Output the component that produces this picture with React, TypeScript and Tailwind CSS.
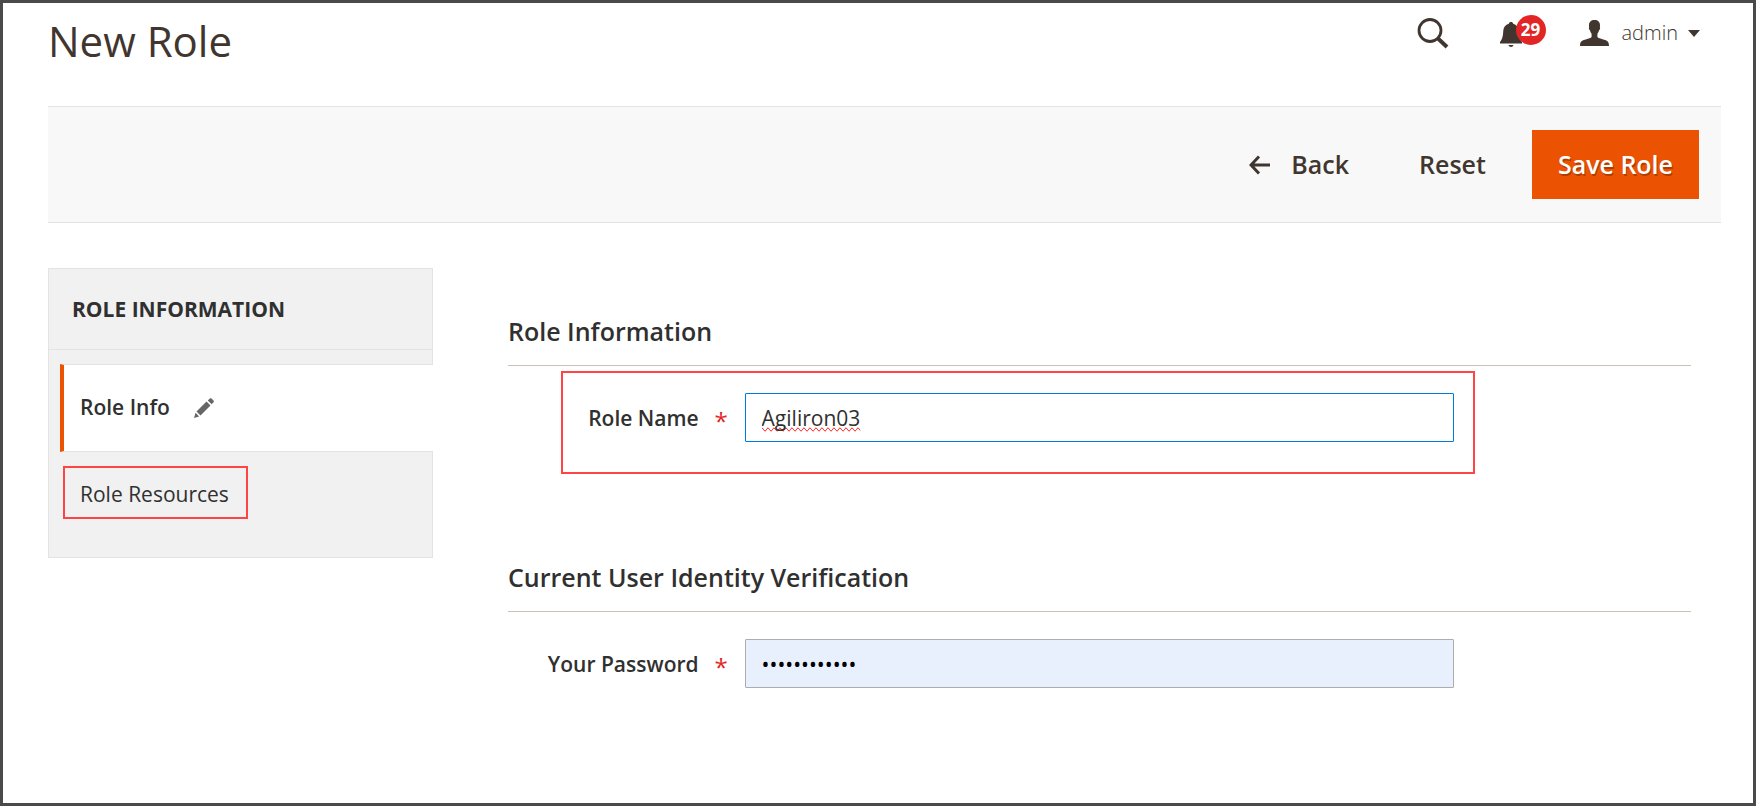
import React, { useState } from 'react';

interface FieldProps {
    id: string;
    label: string;
    children: React.ReactNode;
}

const SearchIcon: React.FC = () => (
    <svg viewBox="0 0 32 32" fill="none" stroke="currentColor" className="h-8 w-8">
        <circle cx="13" cy="13.5" r="11" strokeWidth="2.800" />
        <path d="M20.500 21l2 2" strokeWidth="3" />
        <path d="M21.500 22l8.500 8" strokeWidth="4" />
    </svg>
);

const BellIcon: React.FC = () => (
    <svg viewBox="0 0 22 26" fill="currentColor" className="h-[26px] w-[22px]">
        <path d="M11 0c1.200 0 2 .7 2.200 1.700 3.300.9 5.300 3.300 5.500 6.800.3 5 .6 8 3.300 11.500v1.500H0V20c2.700-3.500 3-6.500 3.300-11.500.2-3.500 2.200-5.900 5.500-6.800C9 .7 9.800 0 11 0z" />
        <path d="M8.500 23h5c-.3 1.300-1.300 2-2.500 2s-2.200-.7-2.500-2z" />
    </svg>
);

const UserIcon: React.FC = () => (
    <svg viewBox="0 0 29 26" fill="currentColor" className="h-[26px] w-[29px]">
        <path d="M14.500 0c3.600 0 5.500 2 5.500 5.200 0 .7 0 1.300-.2 2 .6.400.4 2.300-.6 2.900-.4 1.600-1 2.700-1.800 3.600v3.200c1.200 1.400 4.200 1.900 7.600 3 2.600.8 4 1.800 4 6.100H0c0-4.300 1.400-5.300 4-6.100 3.400-1.100 6.400-1.600 7.600-3v-3.200c-.8-.9-1.400-2-1.800-3.600-1-.6-1.200-2.500-.6-2.900-.2-.7-.2-1.300-.2-2C9 2 10.900 0 14.500 0z" />
    </svg>
);

const PencilIcon: React.FC = () => (
    <svg viewBox="0 0 20 20" fill="currentColor" className="h-5 w-5 text-[#666]">
        <path d="M12.500 3.500l4 4L6.500 17.500l-4-4z" />
        <path d="M13.800 2.400L15.800.5c.5-.5 1.200-.5 1.700 0l2 2c.5.500.5 1.200 0 1.700l-1.900 2z" />
        <path d="M1.600 14.800L5.200 18.400 0 20z" />
    </svg>
);

const BackArrow: React.FC = () => (
    <svg viewBox="0 0 21 20" fill="none" stroke="currentColor" strokeWidth="3" className="h-5 w-[21px]">
        <path d="M10 1.500L2 10l8 8.500M2 10h19" />
    </svg>
);

const Field: React.FC<FieldProps> = ({ id, label, children }) => (
    <div className="flex items-center">
        <label htmlFor={id} className="flex w-1/5 items-center justify-end gap-4 pt-[3px] pr-[18px] font-semibold">
            <span className="whitespace-nowrap">{label}</span>
            <span className="w-3 pt-1 text-2xl font-normal text-[#e22626]">*</span>
        </label>
        <div className="w-3/5">{children}</div>
    </div>
);

const SectionTitle: React.FC<{ children: React.ReactNode }> = ({ children }) => (
    <h2 className="border-b border-[#cac3b4] pb-4 text-[25px] leading-9 font-semibold">{children}</h2>
);

const Header: React.FC = () => (
    <header className="flex items-start justify-between pt-[10px] pr-[21px] pb-[38px] text-[#41362f]">
        <h1 className="text-[42px] leading-[55px]">New Role</h1>
        <div className="flex h-10 items-center">
            <button type="button" aria-label="Search" className="mr-[51px]">
                <SearchIcon />
            </button>
            <button type="button" aria-label="Notifications" className="relative mr-[58px] pt-[3px]">
                <BellIcon />
                <span className="absolute -top-1 left-4 flex h-[30px] w-[30px] items-center justify-center rounded-full bg-[#e22626] text-[17px] font-bold text-white">
                    29
                </span>
            </button>
            <button type="button" className="flex items-center">
                <UserIcon />
                <span className="ml-[13px] text-xl leading-7 font-light">admin</span>
                <svg viewBox="0 0 12 7" fill="currentColor" className="ml-[10px] h-[7px] w-3">
                    <path d="M0 0h12L6 7z" />
                </svg>
            </button>
        </div>
    </header>
);

const Toolbar: React.FC = () => (
    <div className="flex items-center justify-end border-y border-[#e3e3e3] bg-[#f8f8f8] py-[23px] pr-[22px] text-[25px] font-semibold text-[#41362f]">
        <button type="button" className="mr-[70px] flex items-center gap-[21px]">
            <BackArrow />
            Back
        </button>
        <button type="button" className="mr-[46px]">Reset</button>
        <button type="submit" className="h-[69px] bg-[#eb5202] px-[26px] text-white [text-shadow:1px_2px_0_rgba(0,0,0,0.25)]">
            Save Role
        </button>
    </div>
);

const Sidebar: React.FC = () => (
    <nav className="w-[385px] shrink-0 border border-[#e3e3e3] bg-[#f1f1f1]">
        <h3 className="border-b border-[#e3e3e3] px-[23px] py-[26px] leading-7 font-bold uppercase">Role Information</h3>
        <ul className="pt-[14px] pb-[38px]">
            <li className="-mr-px ml-[11px]">
                <a href="#role-info" className="flex h-[88px] items-center gap-6 border-y border-l-4 border-y-[#e3e3e3] border-l-[#eb5202] bg-white pl-4 font-semibold">
                    Role Info
                    <PencilIcon />
                </a>
            </li>
            <li className="mt-[14px] ml-[14px] flex">
                <a href="#role-resources" className="border-2 border-[#f44] pt-3 pr-[17px] pb-2 pl-[15px] leading-[29px]">Role Resources</a>
            </li>
        </ul>
    </nav>
);

const App: React.FC = () => {
    const [roleName, setRoleName] = useState('Agiliron03');
    const [password, setPassword] = useState('rolepassword');

    return (
        <div className="min-h-screen border-3 border-[#4a4a4a] bg-white pr-8 pl-[45px] font-['Open_Sans',sans-serif] text-[21px] text-[#303030]">
            <Header />
            <form onSubmit={(e) => e.preventDefault()}>
                <Toolbar />
                <div className="flex items-start gap-[75px] pt-[45px] pr-[30px]">
                    <Sidebar />
                    <main className="min-w-0 flex-1 pt-[45px]">
                        <section className="relative">
                            <SectionTitle>Role Information</SectionTitle>
                            <div className="pt-[27px]">
                                <Field id="role-name" label="Role Name">
                                    <input
                                        id="role-name"
                                        type="text"
                                        value={roleName}
                                        onChange={(e) => setRoleName(e.target.value)}
                                        className="h-[49px] w-full rounded-[1px] border border-[#007bdb] px-4 outline-none [text-decoration-line:spelling-error]"
                                    />
                                </Field>
                            </div>
                            <div className="pointer-events-none absolute top-[58px] right-[216px] left-[53px] h-[103px] border-2 border-[#f44]" />
                        </section>
                        <section className="pt-[117px]">
                            <SectionTitle>Current User Identity Verification</SectionTitle>
                            <div className="pt-[27px]">
                                <Field id="password" label="Your Password">
                                    <input
                                        id="password"
                                        type="password"
                                        value={password}
                                        onChange={(e) => setPassword(e.target.value)}
                                        className="h-[49px] w-full rounded-[1px] border border-[#adadad] bg-[#e8f0fe] px-4 text-black outline-none"
                                    />
                                </Field>
                            </div>
                        </section>
                    </main>
                </div>
            </form>
        </div>
    );
};

export default App;
